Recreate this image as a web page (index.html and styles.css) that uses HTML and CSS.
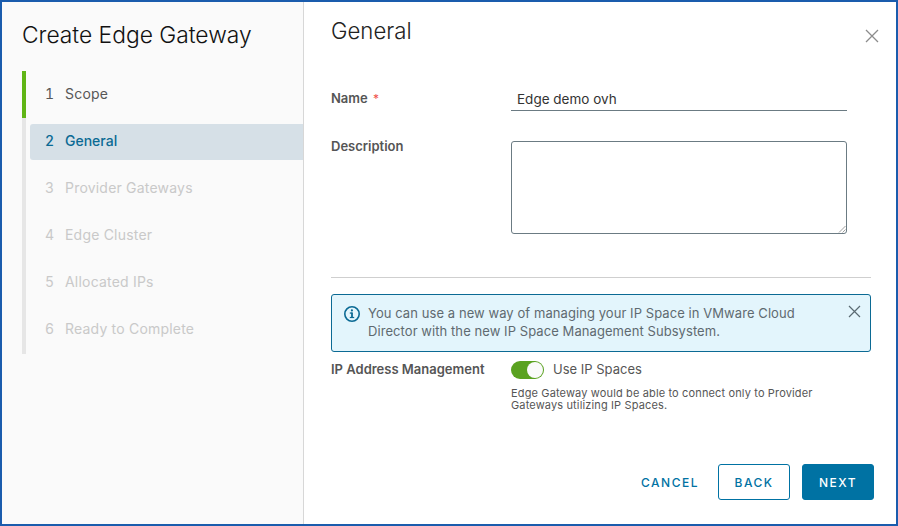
FILE: index.html
```html
<!DOCTYPE html>
<html lang="en">
<head>
<meta charset="utf-8">
<title>Create Edge Gateway</title>
<link rel="stylesheet" href="styles.css">
</head>
<body>
<div class="dialog">
  <aside class="sidebar">
    <h1 class="title">Create Edge Gateway</h1>
    <ol class="steps">
      <li class="step done"><div class="step-inner"><span class="num">1</span><span>Scope</span></div></li>
      <li class="step active"><div class="step-inner"><span class="num">2</span><span>General</span></div></li>
      <li class="step off"><div class="step-inner"><span class="num">3</span><span>Provider Gateways</span></div></li>
      <li class="step off"><div class="step-inner"><span class="num">4</span><span>Edge Cluster</span></div></li>
      <li class="step off"><div class="step-inner"><span class="num">5</span><span>Allocated IPs</span></div></li>
      <li class="step off"><div class="step-inner"><span class="num">6</span><span>Ready to Complete</span></div></li>
    </ol>
  </aside>
  <main class="main">
    <header class="head">
      <h2 class="heading">General</h2>
      <button class="close" aria-label="Close">
        <svg width="14" height="14" viewBox="0 0 14 14"><path d="M1 1l12 12M13 1L1 13" stroke="#8c8c8c" stroke-width="1.3" fill="none"/></svg>
      </button>
    </header>
    <div class="row row-name">
      <label class="label">Name <span class="req">*</span></label>
      <div class="input">Edge demo ovh</div>
    </div>
    <div class="row row-desc">
      <label class="label">Description</label>
      <div class="textarea">
        <svg class="grip" width="8" height="8" viewBox="0 0 8 8"><path d="M7.5 1L1 7.5M7.5 4.5L4.5 7.5" stroke="#a0a0a0" stroke-width="1" fill="none"/></svg>
      </div>
    </div>
    <hr class="rule">
    <div class="alert">
      <svg class="info" width="18" height="18" viewBox="0 0 18 18"><circle cx="9" cy="9" r="7.2" stroke="#0b6a94" stroke-width="1.6" fill="none"/><rect x="8.1" y="7.6" width="1.8" height="5.2" fill="#0b6a94"/><rect x="6.8" y="7.4" width="2.6" height="1.3" fill="#0b6a94"/><rect x="6.8" y="11.9" width="4.4" height="1.2" fill="#0b6a94"/><circle cx="8.9" cy="5.4" r="1.1" fill="#0b6a94"/></svg>
      <p class="alert-text">You can use a new way of managing your IP Space in VMware Cloud Director with the new IP Space Management Subsystem.</p>
      <svg class="alert-close" width="13" height="13" viewBox="0 0 13 13"><path d="M1 1l11 11M12 1L1 12" stroke="#5a6a72" stroke-width="1.2" fill="none"/></svg>
    </div>
    <div class="row row-toggle">
      <label class="label">IP Address Management</label>
      <div class="toggle-col">
        <div class="toggle-line"><span class="toggle"><span class="knob"></span></span><span class="toggle-text">Use IP Spaces</span></div>
        <p class="help">Edge Gateway would be able to connect only to Provider Gateways utilizing IP Spaces.</p>
      </div>
    </div>
    <footer class="foot">
      <button class="btn link">CANCEL</button>
      <button class="btn outline">BACK</button>
      <button class="btn solid">NEXT</button>
    </footer>
  </main>
</div>
</body>
</html>
```
FILE: styles.css
```css
* { box-sizing: border-box; }
html, body { margin: 0; padding: 0; }
body { width: 898px; height: 526px; overflow: hidden; font-family: "Inter", "Noto Sans", sans-serif; color: #565656; background: #fff; }
.dialog { display: flex; width: 898px; height: 526px; border: 2px solid #1a5cad; }
.sidebar { width: 302px; flex: none; background: #fafafa; border-right: 1px solid #d7d7d7; padding: 19px 0 0 20px; }
.title { margin: 0; font-size: 22.8px; line-height: 28px; font-weight: 300; color: #111; }
.steps { list-style: none; margin: 22px 0 0; padding: 0; }
.step { height: 47px; border-left: 4px solid #e6e6e6; padding: 6px 0 5px 4px; }
.step:last-child { height: 48px; }
.step.done { border-left-color: #60b515; }
.step-inner { height: 36px; display: flex; align-items: center; padding: 0 0 4px 15px; font-size: 14px; letter-spacing: 0.2px; border-radius: 3px 0 0 3px; }
.num { width: 20px; flex: none; font-variant-numeric: tabular-nums; letter-spacing: 0; }
.done .step-inner { color: #575757; }
.active .step-inner { background: #d6e0e7; color: #0b6a94; font-weight: 500; letter-spacing: 0; }
.off .step-inner { color: #c9c9c9; }
.main { flex: 1; display: flex; flex-direction: column; padding: 0 25px 0 27px; }
.head { height: 74px; position: relative; padding-top: 15px; }
.heading { margin: 0; font-size: 22.2px; line-height: 28px; font-weight: 300; color: #222; }
.close { position: absolute; right: -8px; top: 27px; width: 14px; height: 14px; padding: 0; border: 0; background: none; display: block; }
.row { display: flex; }
.label { width: 180px; flex: none; font-size: 13px; font-weight: 600; color: #555; line-height: 18px; }
.req { color: #f0504a; font-weight: 400; margin-left: 2px; font-size: 12px; }
.row-name { height: 59px; padding-top: 13px; }
.input { width: 336px; height: 23px; margin-top: -1px; border-bottom: 1px solid #6b7b83; font-size: 13.5px; line-height: 22px; padding-left: 6px; color: #333; }
.row-desc { margin-top: 1px; }
.row-desc .label { padding-top: 1px; }
.textarea { width: 336px; height: 93px; margin-top: 5px; border: 1px solid #6b7b83; border-radius: 3px; position: relative; background: #fff; }
.grip { position: absolute; right: 0; bottom: 0; }
.rule { width: 100%; height: 1px; border: 0; background: #cfcfcf; margin: 43px 0 16px; flex: none; }
.alert { display: flex; align-items: flex-start; height: 58px; flex: none; background: #e3f5fc; border: 1px solid #0b6a94; border-radius: 3px; padding: 9px 9px 0 11px; position: relative; }
.info { flex: none; margin: 1px 7px 0 0; }
.alert-text { margin: 0; width: 450px; font-size: 13px; line-height: 18px; letter-spacing: 0.07px; color: #5f6a70; }
.alert-close { position: absolute; top: 10px; right: 9px; }
.row-toggle { margin-top: 8px; }
.toggle-line { display: flex; align-items: center; height: 20px; }
.toggle { width: 33px; height: 18px; border-radius: 9px; background: #5aa220; display: block; position: relative; margin-right: 9px; }
.knob { position: absolute; right: 1px; top: 1px; width: 16px; height: 16px; border-radius: 50%; background: #fafafa; }
.toggle-text { font-size: 13px; color: #565656; padding-bottom: 2px; }
.help { margin: 7px 0 0; width: 320px; font-size: 11px; line-height: 12px; letter-spacing: 0.14px; color: #565656; }
.foot { margin-top: auto; display: flex; justify-content: flex-end; gap: 12px; margin-bottom: 24px; margin-right: -3px; }
.btn { height: 36px; width: 72px; border-radius: 3px; font-family: inherit; font-size: 12px; font-weight: 500; letter-spacing: 1.5px; padding: 0; }
.link { background: none; border: 0; color: #0072a3; width: 84px; margin-right: -6px; }
.outline { background: #fff; border: 1px solid #0072a3; color: #0072a3; }
.solid { background: #0072a3; border: 1px solid #0072a3; color: #fff; }
```
